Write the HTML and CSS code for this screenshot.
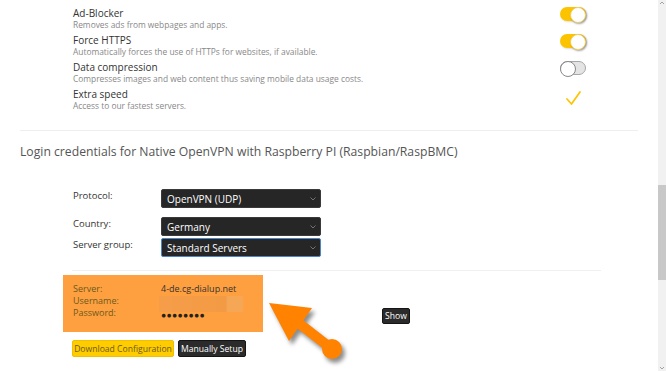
FILE: index.html
```html
<!DOCTYPE html>
<html>
<head>
<meta charset="utf-8">
<link rel="stylesheet" href="styles.css">
</head>
<body>
<div class="page">
  <main class="content">
    <section class="features">
      <div class="feature">
        <div class="ftext"><div class="ftitle">Ad-Blocker</div><div class="fdesc">Removes ads from webpages and apps.</div></div>
        <div class="fctl"><span class="toggle on"></span></div>
      </div>
      <div class="feature">
        <div class="ftext"><div class="ftitle">Force HTTPS</div><div class="fdesc">Automatically forces the use of HTTPs for websites, if available.</div></div>
        <div class="fctl"><span class="toggle on"></span></div>
      </div>
      <div class="feature">
        <div class="ftext"><div class="ftitle">Data compression</div><div class="fdesc">Compresses images and web content thus saving mobile data usage costs.</div></div>
        <div class="fctl"><span class="toggle off"></span></div>
      </div>
      <div class="feature">
        <div class="ftext"><div class="ftitle">Extra speed</div><div class="fdesc">Access to our fastest servers.</div></div>
        <div class="fctl"><svg class="check" viewBox="0 0 16 16" width="16" height="16"><path d="M2 9 L6.5 14 L15 2" fill="none" stroke="#ffc400" stroke-width="1.7" stroke-linejoin="round" stroke-linecap="round"/></svg></div>
      </div>
    </section>

    <hr class="divider">

    <h2 class="heading">Login credentials for Native OpenVPN with Raspberry PI (Raspbian/RaspBMC)</h2>

    <div class="form">
      <div class="frow r1">
        <label class="flabel">Protocol:</label>
        <div class="select"><span>OpenVPN (UDP)</span><svg class="chev" viewBox="0 0 6 4" width="6" height="4"><path d="M0.5 0.5 L3 3 L5.5 0.5" fill="none" stroke="#888" stroke-width="0.8"/></svg></div>
      </div>
      <div class="frow r2">
        <label class="flabel">Country:</label>
        <div class="select"><span>Germany</span><svg class="chev" viewBox="0 0 6 4" width="6" height="4"><path d="M0.5 0.5 L3 3 L5.5 0.5" fill="none" stroke="#888" stroke-width="0.8"/></svg></div>
      </div>
      <div class="frow r3">
        <label class="flabel">Server group:</label>
        <div class="select focus"><span>Standard Servers</span><svg class="chev" viewBox="0 0 6 4" width="6" height="4"><path d="M0.5 0.5 L3 3 L5.5 0.5" fill="none" stroke="#888" stroke-width="0.8"/></svg></div>
      </div>
    </div>

    <hr class="divider2">

    <div class="cred-row">
      <div class="cred">
        <div class="crow"><span class="ck">Server:</span><span class="cv">4-de.cg-dialup.net</span></div>
        <div class="crow"><span class="ck">Username:</span><span class="cv"><span class="blur"></span></span></div>
        <div class="crow"><span class="ck">Password:</span><span class="cv dots">&#9679;&#9679;&#9679;&#9679;&#9679;&#9679;&#9679;&#9679;</span></div>
      </div>
      <button class="btn dark show">Show</button>
    </div>

    <div class="actions">
      <button class="btn yellow dl">Download Configuration</button>
      <button class="btn dark ms">Manually Setup</button>
    </div>

    <svg class="arrow" viewBox="255 290 100 75" width="100" height="75">
      <polygon points="269,303 312,308 289,341" fill="#ff8200"/>
      <line x1="296" y1="321" x2="332" y2="349" stroke="#ff8200" stroke-width="10"/>
      <circle cx="332" cy="349" r="10" fill="#ff8200"/>
    </svg>
  </main>
  <div class="scrollbar">
    <svg class="sb-arrow" viewBox="0 0 8 6" width="8" height="6"><path d="M2 4 L4 2 L6 4" fill="none" stroke="#a3a3a3" stroke-width="1"/></svg>
    <div class="sb-track"><div class="sb-thumb"></div></div>
    <svg class="sb-arrow" viewBox="0 0 8 6" width="8" height="6"><path d="M2 2 L4 4 L6 2" fill="none" stroke="#a3a3a3" stroke-width="1"/></svg>
  </div>
</div>
</body>
</html>
```

FILE: styles.css
```css
* { box-sizing: border-box; }
html, body { margin: 0; padding: 0; background: #fff; }
body { font-family: "Open Sans", "Liberation Sans", sans-serif; }

.page { display: flex; width: 666px; height: 371px; overflow: hidden; }
.content { flex: 1; position: relative; }

.features { padding: 7px 72px 0 73px; display: flex; flex-direction: column; gap: 4px; }
.feature { display: flex; justify-content: space-between; align-items: flex-start; height: 23px; }
.ftitle { font-size: 10px; line-height: 12px; color: #333; }
.fdesc { font-size: 8.4px; line-height: 11px; color: #888; }
.fctl { width: 26px; display: flex; justify-content: center; }

.toggle { width: 26px; height: 14px; border-radius: 7px; position: relative; display: block; }
.toggle.on { background: #fcc400; box-shadow: 1px 1px 2px rgba(0,0,0,.15); }
.toggle.on::after { content: ""; position: absolute; right: 0; top: 0; width: 14px; height: 14px; border-radius: 50%; background: #fff; border: 1px solid #f2d060; box-shadow: 1px 1px 2px rgba(0,0,0,.35); }
.toggle.off { background: #e4e4e4; border: 1px solid #a8a8a8; }
.toggle.off::after { content: ""; position: absolute; left: -1px; top: -1px; width: 14px; height: 14px; border-radius: 50%; background: #fff; border: 1.5px solid #888; }
.check { display: block; margin-top: 2px; }

.divider { margin: 19px 20px 0; border: 0; border-top: 1px solid #eee; height: 0; }
.heading { margin: 12px 0 0 20px; font-size: 12.2px; line-height: 18px; font-weight: 400; color: #555; }

.form { margin-top: 28px; padding-left: 73px; }
.frow { display: flex; align-items: flex-start; }
.frow.r1 { margin-bottom: 9px; }
.frow.r2 { margin-bottom: 2px; }
.flabel { width: 88px; font-size: 9.5px; line-height: 12px; padding-top: 1px; color: #333; }
.select { width: 160px; height: 19px; background: #262626; border: 1px solid #3a3a3a; border-radius: 2px; color: #fff; font-size: 10px; padding: 0 4px 0 5px; display: flex; align-items: center; justify-content: space-between; }
.select.focus { border-color: #4a86c8; }
.chev { display: block; }

.divider2 { margin: 13px 57px 0 72px; border: 0; border-top: 1px solid #f0f0f0; height: 0; }

.cred-row { display: flex; align-items: flex-start; margin: 4px 0 0 63px; }
.cred { width: 200px; height: 57px; background: #ffa040; padding: 8px 0 0 10px; }
.crow { display: flex; height: 12px; line-height: 12px; font-size: 9px; }
.ck { width: 88px; color: #6b5a1e; }
.cv { color: #333; }
.blur { display: block; width: 84px; height: 16px; margin: 1px 0 0 -2px; background: linear-gradient(90deg, #f59d48 0%, #f39a45 80%, #f6a755 81%, #f6a755 100%); filter: blur(0.5px); }
.dots { font-size: 8.6px; letter-spacing: 0.3px; color: #222; padding-top: 2px; }

.btn { font-family: "Open Sans", "Liberation Sans", sans-serif; font-size: 8.6px; white-space: nowrap; border-radius: 2px; padding: 0; display: flex; align-items: center; justify-content: center; }
.btn.dark { background: #2b2b2b; color: #fff; border: 1px solid #151515; }
.btn.yellow { background: #ffcc00; color: #6b5a1e; border: 1px solid #f0c000; }
.show { width: 28px; height: 16px; margin: 33px 0 0 119px; }

.actions { display: flex; gap: 4px; margin: 8px 0 0 72px; }
.dl { width: 102px; height: 17px; }
.ms { width: 68px; height: 17px; }

.arrow { position: absolute; left: 255px; top: 290px; filter: drop-shadow(3px 4px 2px rgba(0,0,0,.45)); }

.scrollbar { width: 8px; background: #f1f1f1; display: flex; flex-direction: column; }
.sb-arrow { display: block; flex: none; }
.sb-track { flex: 1; padding-top: 179px; }
.sb-thumb { height: 95px; background: #c8c8c8; }
```
